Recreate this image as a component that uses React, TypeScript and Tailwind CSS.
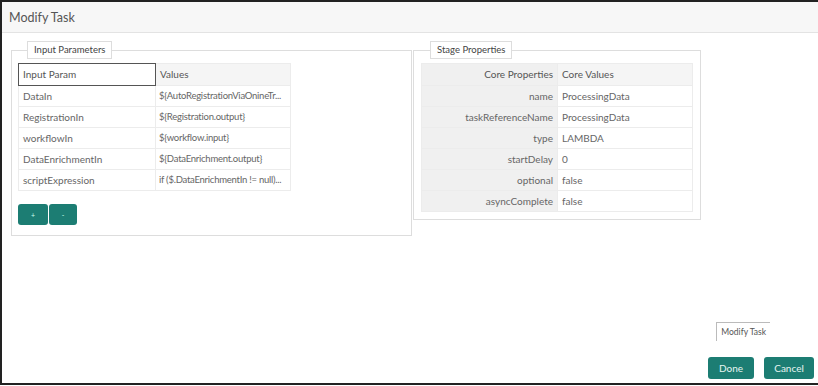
const inputRows: [string, string][] = [
  ["DataIn", "${AutoRegistrationViaOnineTr..."],
  ["RegistrationIn", "${Registration.output}"],
  ["workflowIn", "${workflow.input}"],
  ["DataEnrichmentIn", "${DataEnrichment.output}"],
  ["scriptExpression", "if ($.DataEnrichmentIn != null)..."],
];

const stageRows: [string, string][] = [
  ["name", "ProcessingData"],
  ["taskReferenceName", "ProcessingData"],
  ["type", "LAMBDA"],
  ["startDelay", "0"],
  ["optional", "false"],
  ["asyncComplete", "false"],
];

export default function App() {
  return (
    <div className="h-[386px] w-[818px] overflow-hidden bg-white font-['Lato',sans-serif] text-[10px] text-[#666]">
      <div className="flex h-[385px] flex-col border-y-2 border-l-2 border-[#222]">
        <div className="flex h-[31px] shrink-0 items-center border-b border-[#e3e3e3] bg-[#f7f7f7] pl-[7px] pt-[2px] text-[12.5px] text-[#555]">
          Modify Task
        </div>

        <div className="flex items-start gap-[1px] pl-[9px] pt-[8px]">
          <fieldset className="h-[195px] w-[401px] border border-[#ddd] px-[6px] pt-0">
            <legend className="ml-[9px] border border-[#ddd] bg-white px-[6px] py-[1px] text-[9.5px] text-[#444]">
              Input Parameters
            </legend>
            <table className="mt-[4px] w-[273px] table-fixed border-collapse">
              <thead>
                <tr className="h-[22px] bg-[#f5f5f5] text-[#555]">
                  <th className="w-[137px] border-[1.5px] border-[#555] bg-white pl-[4px] text-left font-normal">Input Param</th>
                  <th className="border border-[#ececec] pl-[4px] text-left font-normal">Values</th>
                </tr>
              </thead>
              <tbody>
                {inputRows.map(([k, v]) => (
                  <tr className="h-[21px]" key={k}>
                    <td className="border border-[#ececec] pl-[4px]">{k}</td>
                    <td className="overflow-hidden whitespace-nowrap border border-[#ececec] pl-[3px] text-[9.5px] tracking-[-0.25px]">{v}</td>
                  </tr>
                ))}
              </tbody>
            </table>
            <div className="mt-[13px] flex">
              <button className="h-[21px] w-[30px] rounded-[3px] bg-[#1c7d73] text-[7px] text-[#cfe]">+</button>
              <button className="ml-px h-[21px] w-[28px] rounded-[3px] bg-[#1c7d73] text-[7px] text-[#cfe]">-</button>
            </div>
          </fieldset>

          <fieldset className="h-[179px] w-[287px] border border-[#ddd] px-[7px] pt-0">
            <legend className="ml-[9px] border border-[#ddd] bg-white px-[6px] py-[1px] text-[9.5px] text-[#444]">
              Stage Properties
            </legend>
            <table className="mt-[4px] w-[272px] table-fixed border-collapse">
              <thead>
                <tr className="h-[22px] text-[#555]">
                  <th className="w-[136px] border border-[#ececec] bg-[#f0f0f0] pr-[4px] text-right font-normal">Core Properties</th>
                  <th className="border border-[#ececec] bg-[#f5f5f5] pl-[4px] text-left font-normal">Core Values</th>
                </tr>
              </thead>
              <tbody>
                {stageRows.map(([k, v]) => (
                  <tr className="h-[21px]" key={k}>
                    <td className="border border-[#ececec] bg-[#f0f0f0] pr-[4px] text-right">{k}</td>
                    <td className="border border-[#ececec] pl-[4px]">{v}</td>
                  </tr>
                ))}
              </tbody>
            </table>
          </fieldset>
        </div>

        <div className="mt-auto flex flex-col items-end pb-[4px] pr-[4px]">
          <div className="mr-[44px] border-l border-t border-[#bbb] px-[4px] pb-[2px] pt-[3px] text-[8.5px] text-[#555]">
            Modify Task
          </div>
          <div className="mt-[16px] flex gap-[10px]">
            <button className="h-[22px] w-[46px] rounded-[3px] bg-[#1c7d73] text-[10px] text-[#e6f5f2]">Done</button>
            <button className="h-[22px] w-[50px] rounded-[3px] bg-[#1c7d73] text-[10px] text-[#e6f5f2]">Cancel</button>
          </div>
        </div>
      </div>
    </div>
  );
}
